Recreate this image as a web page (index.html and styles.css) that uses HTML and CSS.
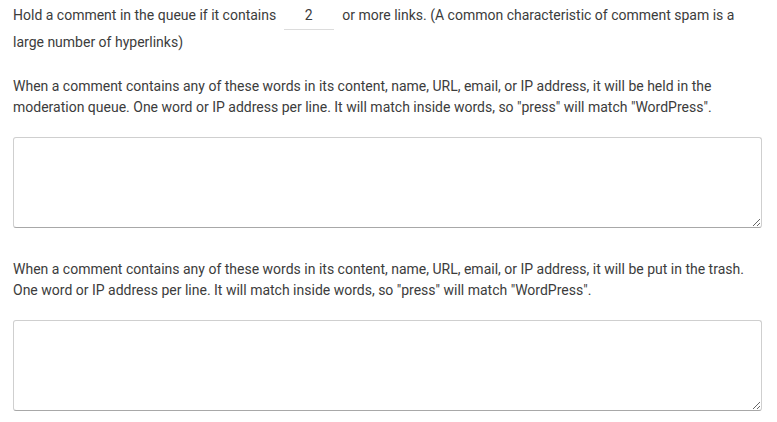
FILE: index.html
```html
<!DOCTYPE html>
<html lang="en">
<head>
  <meta charset="UTF-8" />
  <title>Discussion Settings</title>
  <link rel="stylesheet" href="styles.css">
</head>
<body>

<div class="settings">
  <p class="links-row">
    Hold a comment in the queue if it contains
    <input class="num-input" type="text" value="2">
    or more links. (A common characteristic of comment spam is a large number of hyperlinks)
  </p>

  <p class="desc">When a comment contains any of these words in its content, name, URL, email, or IP address, it will be held in the moderation queue. One word or IP address per line. It will match inside words, so "press" will match "WordPress".</p>
  <textarea class="words-box"></textarea>

  <p class="desc">When a comment contains any of these words in its content, name, URL, email, or IP address, it will be put in the trash. One word or IP address per line. It will match inside words, so "press" will match "WordPress".</p>
  <textarea class="words-box"></textarea>
</div>

</body>
</html>
```

FILE: styles.css
```css
* {
  margin: 0;
  padding: 0;
  box-sizing: border-box;
}

body {
  font-family: 'Roboto', 'Liberation Sans', sans-serif;
  font-size: 14px;
  color: #3c3c3c;
  background: #ffffff;
}

.settings {
  padding: 2px 15px 0 13px;
}

.links-row {
  line-height: 27px;
  margin-bottom: 20px;
}

.num-input {
  width: 50px;
  height: 28px;
  margin: 0 5px -1px 4px;
  border: none;
  border-bottom: 1px solid #dcdcdc;
  font-family: inherit;
  font-size: 14px;
  color: #3c3c3c;
  text-align: center;
  padding: 2px 0 4px;
  vertical-align: top;
  outline: none;
  background: transparent;
}

.desc {
  line-height: 21px;
  margin-bottom: 19px;
}

.words-box {
  display: block;
  width: 100%;
  height: 91px;
  border: 1px solid #cfcfcf;
  border-bottom-color: #a8a8a8;
  border-radius: 3px;
  resize: vertical;
  margin-bottom: 31px;
  font-family: inherit;
  font-size: 13px;
}
```
